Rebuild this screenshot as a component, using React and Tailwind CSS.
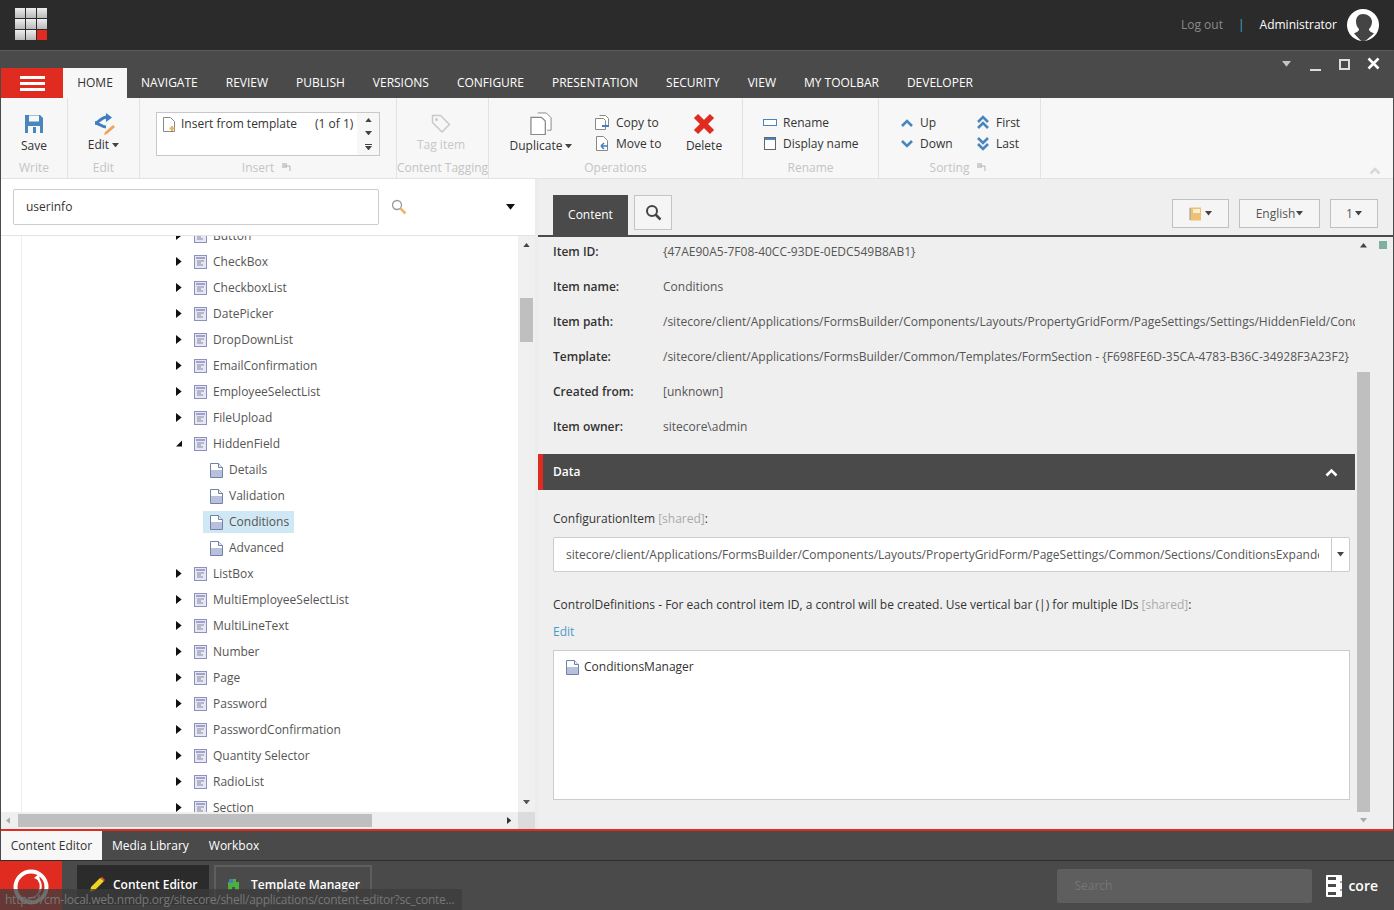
import React from "react";

const Tri = ({ dir = "down", c = "#333", s = 4, className = "" }) => {
  const pts = { down: "0,0 8,0 4,5", up: "0,5 8,5 4,0", left: "5,0 5,8 0,4", right: "0,0 0,8 5,4" }[dir];
  const vb = dir === "left" || dir === "right" ? "0 0 5 8" : "0 0 8 5";
  const w = dir === "left" || dir === "right" ? s * 1.25 : s * 2;
  const h = dir === "left" || dir === "right" ? s * 2 : s * 1.25;
  return <svg viewBox={vb} width={w} height={h} className={className}><polygon points={pts} fill={c} /></svg>;
};

const TreeIcon = () => (
  <svg width="13" height="14" viewBox="0 0 13 14" className="shrink-0">
    <rect x="0.5" y="0.5" width="12" height="13" fill="#e6e7f2" stroke="#8d8fc0" />
    <rect x="2" y="2" width="9" height="2" fill="#a0a2cc" />
    <path d="M3 6h7M3 8h4M3 10h6" stroke="#8587a0" strokeWidth="1" />
  </svg>
);

const PageIcon = ({ className = "" }) => (
  <svg width="13" height="15" viewBox="0 0 13 15" className={"shrink-0 " + className}>
    <path d="M0.5 0.5H8.5L12.5 4.5V14.5H0.5Z" fill="#fff" stroke="#6f82ab" />
    <path d="M8.5 0.5V4.5H12.5" fill="#e6eaf3" stroke="#6f82ab" />
    <rect x="1" y="7" width="11" height="7" fill="#b9c0dc" />
  </svg>
);

const tabs = ["NAVIGATE", "REVIEW", "PUBLISH", "VERSIONS", "CONFIGURE", "PRESENTATION", "SECURITY", "VIEW", "MY TOOLBAR", "DEVELOPER"];

const Group = ({ w, label, corner, children, pl = 0 }) => (
  <div style={{ width: w }} className="shrink-0 h-full border-r border-[#e3e3e3] flex flex-col">
    <div className="flex-1 min-h-0 flex" style={{ paddingLeft: pl }}>{children}</div>
    <div className={"h-[20px] flex items-center justify-center gap-[8px] text-[#c4c4c4] whitespace-nowrap leading-none pb-[1px] " + (corner ? "pr-[3px]" : "")}>
      {label}
      {corner && (
        <svg width="9" height="9" viewBox="0 0 9 9"><rect x="0" y="0" width="5" height="5" fill="#cfcfcf" /><path d="M3 3h5v5" fill="none" stroke="#b5b5b5" /></svg>
      )}
    </div>
  </div>
);

const SmallBtn = ({ icon, label, iw = 21 }) => (
  <div className="flex items-center h-[21px] whitespace-nowrap text-[#333]">
    <div style={{ width: iw }} className="flex justify-start shrink-0">{icon}</div>
    <span>{label}</span>
  </div>
);

const treeItems = ["Button", "CheckBox", "CheckboxList", "DatePicker", "DropDownList", "EmailConfirmation", "EmployeeSelectList", "FileUpload"];
const treeItems2 = ["ListBox", "MultiEmployeeSelectList", "MultiLineText", "Number", "Page", "Password", "PasswordConfirmation", "Quantity Selector", "RadioList", "Section"];

const TreeRow = ({ label, open }) => (
  <div className="h-[26px] flex items-center pl-[175px] text-[#555]">
    <div className="w-[6px] flex justify-center shrink-0 -mt-[1px]">
      {open ? (
        <svg width="7" height="7" viewBox="0 0 7 7"><polygon points="7,0 7,7 0,7" fill="#111" /></svg>
      ) : (
        <Tri dir="right" c="#111" s={4.5} />
      )}
    </div>
    <div className="ml-[12px]"><TreeIcon /></div>
    <span className="ml-[6px] whitespace-nowrap">{label}</span>
  </div>
);

const SubRow = ({ label, sel }) => (
  <div className="h-[26px] flex items-center pl-[202px]">
    <div className={"h-[22px] flex items-center pl-[7px] pr-[5px] text-[#555] " + (sel ? "bg-[#cfe8f3]" : "")}>
      <PageIcon />
      <span className="ml-[6px] whitespace-nowrap">{label}</span>
    </div>
  </div>
);

const Field = ({ k, v }) => (
  <div className="h-[35px] flex items-center whitespace-nowrap overflow-hidden">
    <div className="w-[110px] shrink-0 font-semibold text-[#333]">{k}</div>
    <div className="text-[#555]">{v}</div>
  </div>
);

const UpDown = ({ double, up }) => (
  <svg width="14" height={double ? 15 : 10} viewBox={double ? "0 0 14 15" : "0 0 14 10"}>
    {double ? (
      up ? (
        <path d="M2 7l5-5 5 5M2 13l5-5 5 5" fill="none" stroke="#4a86be" strokeWidth="2.6" />
      ) : (
        <path d="M2 2l5 5 5-5M2 8l5 5 5-5" fill="none" stroke="#4a86be" strokeWidth="2.6" />
      )
    ) : up ? (
      <path d="M2 8l5-5 5 5" fill="none" stroke="#4a86be" strokeWidth="2.6" />
    ) : (
      <path d="M2 2l5 5 5-5" fill="none" stroke="#4a86be" strokeWidth="2.6" />
    )}
  </svg>
);

export default function App() {
  return (
    <div className="relative w-[1394px] h-[910px] overflow-hidden flex flex-col font-['Open_Sans',sans-serif] text-[12px] leading-[16px] bg-[#2b2b2b]">
      {/* top bar */}
      <div className="h-[50px] shrink-0 bg-[#2b2b2b] flex items-center pl-[15px] pr-[15px]">
        <div className="grid grid-cols-3 gap-[1px] w-[32px] h-[32px] -mt-[2px]">
          {Array.from({ length: 9 }).map((_, i) => (
            <div key={i} className={i === 8 ? "bg-[#e02b20]" : "bg-gradient-to-b from-[#eeeeee] to-[#b9b9b9]"} />
          ))}
        </div>
        <div className="ml-auto flex items-center">
          <span className="text-[#8a8a8a]">Log out</span>
          <span className="ml-[15px] text-[#4aa3df]">|</span>
          <span className="ml-[15px] text-white">Administrator</span>
          <svg width="32" height="32" viewBox="0 0 32 32" className="ml-[10px]">
            <defs><clipPath id="av"><circle cx="16" cy="16" r="16" /></clipPath></defs>
            <circle cx="16" cy="16" r="16" fill="#fff" />
            <g clipPath="url(#av)">
              <path d="M16 5c-4.500 0-7 3.500-7 7.500 0 3 1.200 5.500 3 7.500 0 2-1 2.500-5 4.500L16 34l11-9.500c-4-2-5-2.500-5-4.500 1.800-2 3-4.500 3-7.500C25 8.500 20.500 5 16 5z" fill="#444" />
            </g>
          </svg>
        </div>
      </div>

      {/* window */}
      <div className="flex-1 min-h-0 flex flex-col border-x border-[#4a4a4a] border-t border-t-[#5c5c5c] bg-[#4a4a4a]">
        {/* title row */}
        <div className="h-[17px] shrink-0 flex items-start justify-end text-white">
          <div className="flex items-center h-[24px] pt-[2px]">
            <Tri c="#c4c4c4" s={4.5} />
            <div className="ml-[19px] mt-[11px] w-[11px] h-[2px] bg-[#dcdcdc]" />
            <div className="ml-[18px] w-[11px] h-[11px] border-[2px] border-[#dcdcdc]" />
            <svg width="13" height="13" viewBox="0 0 13 13" className="ml-[17px] mr-[13px] -mt-[1px]"><path d="M1.500 1.500l10 10M11.500 1.500l-10 10" stroke="#fff" strokeWidth="2.600" /></svg>
          </div>
        </div>
        {/* tabs */}
        <div className="h-[30px] shrink-0 flex items-stretch text-[#fff]">
          <div className="w-[62px] bg-[#e02b20] flex items-center justify-center">
            <div className="w-[25px] flex flex-col gap-[3px]">
              <div className="h-[3px] bg-white" /><div className="h-[3px] bg-white" /><div className="h-[3px] bg-white" />
            </div>
          </div>
          <div className="w-[64px] bg-[#f7f7f7] text-[#333] flex items-center justify-center">HOME</div>
          {tabs.map((t) => (
            <div key={t} className="px-[14px] flex items-center whitespace-nowrap">{t}</div>
          ))}
        </div>
        {/* ribbon */}
        <div className="h-[81px] shrink-0 bg-[#f7f7f7] border-b border-[#e3e3e3] flex text-[#333]">
          <Group w={67} label="Write">
            <div className="w-full flex flex-col items-center pt-[16px]">
              <svg width="20" height="20" viewBox="0 0 20 20"><path d="M1 1h15l3 3v15H1z" fill="#4a86be" /><rect x="5" y="1.500" width="10" height="6" fill="#f7f7f7" /><rect x="4" y="12" width="12" height="7" fill="#f7f7f7" /><rect x="9" y="13" width="3" height="6" fill="#4a86be" /></svg>
              <div className="mt-[4px]">Save</div>
            </div>
          </Group>
          <Group w={72} label="Edit">
            <div className="w-full flex flex-col items-center pt-[15px]">
              <svg width="22" height="22" viewBox="0 0 22 22" className="ml-[2px]">
                <path d="M1 10C5 10 7 4 13 4" stroke="#3f7fbf" strokeWidth="3" fill="none" />
                <path d="M12 0L18 4.500L12 9z" fill="#3f7fbf" />
                <path d="M1 10C5 10 7 14 12 14" stroke="#3f7fbf" strokeWidth="3" fill="none" />
                <path d="M19 12l2 2-8 7-3 1 1-3z" fill="#f0a35a" />
              </svg>
              <div className="mt-[2px] flex items-center gap-[3px]">Edit <Tri c="#444" s={3.5} /></div>
            </div>
          </Group>
          <Group w={257} label="Insert" corner pl={16}>
            <div className="mt-[14px] w-[224px] h-[44px] border border-[#c8c8c8] bg-white flex">
              <div className="flex-1 flex items-start pl-[6px] pt-[3px]">
                <svg width="13" height="15" viewBox="0 0 13 15" className="mt-[1px] shrink-0"><path d="M0.500 0.500H7.500L11.500 4.500V14.500H0.500Z" fill="#fff" stroke="#888" /><path d="M9 9v5M6.500 11.500h5" stroke="#efb15b" strokeWidth="2" /></svg>
                <span className="ml-[5px]">Insert from template</span>
                <span className="ml-[18px]">(1 of 1)</span>
              </div>
              <div className="w-[22px] bg-[#f7f7f7] flex flex-col items-center justify-between py-[5px]">
                <Tri dir="up" c="#444" s={3.5} />
                <Tri c="#444" s={3.5} />
                <div className="flex flex-col items-center gap-[1px]"><div className="w-[7px] h-[1px] bg-[#444]" /><Tri c="#444" s={3.5} /></div>
              </div>
            </div>
          </Group>
          <Group w={92} label="Content Tagging">
            <div className="w-full flex flex-col items-center pt-[16px] pr-[3px] text-[#c8c8c8]">
              <svg width="20" height="20" viewBox="0 0 20 20"><path d="M1.500 1.500h8l9 9-7.500 7.500-9.500-9.500z" fill="none" stroke="#c9c9c9" strokeWidth="1.500" /><circle cx="5.500" cy="5.500" r="1.500" fill="#c9c9c9" /></svg>
              <div className="mt-[3px]">Tag item</div>
            </div>
          </Group>
          <Group w={254} label="Operations" pl={21}>
            <div className="w-[62px] flex flex-col items-center pt-[14px]">
              <svg width="24" height="23" viewBox="0 0 24 24"><path d="M8.500 1h9l5 5v13h-4" fill="#fff" stroke="#888" /><path d="M1.500 5.500h11l4 4v14h-15z" fill="#fff" stroke="#888" strokeWidth="1.300" /></svg>
              <div className="mt-[3px] flex items-center gap-[3px] whitespace-nowrap">Duplicate <Tri c="#444" s={3.500} /></div>
            </div>
            <div className="ml-[23px] w-[72px] pt-[14px] flex flex-col">
              <SmallBtn label="Copy to" icon={<svg width="15" height="15" viewBox="0 0 15 15"><path d="M4.500 .5h6l3 3v7" fill="#fff" stroke="#888" /><path d="M.5 3.500h8l2 2v9h-10z" fill="#fff" stroke="#888" /><path d="M7 11h7" stroke="#3f7fbf" strokeWidth="2" /></svg>} />
              <SmallBtn label="Move to" icon={<svg width="13" height="15" viewBox="0 0 13 15" className="ml-[1px]"><path d="M.5 .5h7l4 4v10h-11z" fill="#fff" stroke="#888" /><path d="M5 10h7M5 10l3-3M5 10l3 3" stroke="#3f7fbf" strokeWidth="1.500" fill="none" /></svg>} />
            </div>
            <div className="ml-[19px] w-[36px] flex flex-col items-center pt-[15px]">
              <svg width="22" height="22" viewBox="0 0 22 22"><path d="M3 3l16 16M19 3L3 19" stroke="#e02b20" strokeWidth="6" /></svg>
              <div className="mt-[3px]">Delete</div>
            </div>
          </Group>
          <Group w={136} label="Rename" pl={20}>
            <div className="pt-[14px] flex flex-col">
              <SmallBtn iw={20} label="Rename" icon={<svg width="14" height="7" viewBox="0 0 14 7"><rect x=".5" y=".5" width="13" height="6" fill="#fff" stroke="#4a86be" /></svg>} />
              <SmallBtn iw={20} label="Display name" icon={<svg width="12" height="13" viewBox="0 0 12 13" className="ml-[1px]"><rect x=".5" y=".5" width="11" height="12" fill="#fff" stroke="#666" /><rect x="1" y="1" width="10" height="2" fill="#4a86be" /></svg>} />
            </div>
          </Group>
          <Group w={162} label="Sorting" corner pl={21}>
            <div className="pt-[14px] w-[76px] flex flex-col">
              <SmallBtn iw={20} label="Up" icon={<UpDown up />} />
              <SmallBtn iw={20} label="Down" icon={<UpDown />} />
            </div>
            <div className="pt-[14px] flex flex-col">
              <SmallBtn iw={20} label="First" icon={<UpDown double up />} />
              <SmallBtn iw={20} label="Last" icon={<UpDown double />} />
            </div>
          </Group>
          <div className="flex-1 flex items-end justify-end pr-[12px] pb-[3px]">
            <svg width="12" height="8" viewBox="0 0 12 8"><path d="M1.500 6.500L6 2l4.500 4.500" fill="none" stroke="#d8d8d8" strokeWidth="2.500" /></svg>
          </div>
        </div>
        {/* main */}
        <div className="h-[650px] shrink-0 flex bg-white">
          {/* left */}
          <div className="w-[534px] shrink-0 flex flex-col bg-white">
            <div className="h-[57px] shrink-0 border-b border-[#e3e3e3] flex items-center pl-[12px] pr-[20px]">
              <div className="w-[366px] h-[36px] border border-[#cccccc] rounded-[2px] flex items-center pl-[12px] text-[#333]">userinfo</div>
              <svg width="16" height="16" viewBox="0 0 16 16" className="ml-[12px]"><circle cx="6" cy="6" r="4.500" fill="none" stroke="#999" strokeWidth="1.300" /><path d="M9.500 9.500l5 5" stroke="#e9b66f" strokeWidth="2.500" /></svg>
              <div className="ml-auto"><Tri c="#111" s={4.500} /></div>
            </div>
            <div className="flex-1 min-h-0 flex">
              <div className="flex-1 min-w-0 overflow-hidden border-l border-[#eeeeee] ml-[20px]">
                <div className="-mt-[13px] -ml-[21px]">
                  {treeItems.map((t) => <TreeRow key={t} label={t} />)}
                  <TreeRow label="HiddenField" open />
                  <SubRow label="Details" />
                  <SubRow label="Validation" />
                  <SubRow label="Conditions" sel />
                  <SubRow label="Advanced" />
                  {treeItems2.map((t) => <TreeRow key={t} label={t} />)}
                </div>
              </div>
              <div className="w-[17px] shrink-0 bg-[#f0f0f0] flex flex-col items-center">
                <div className="h-[18px] flex items-center"><Tri dir="up" c="#444" s={3.500} /></div>
                <div className="w-[13px] h-[44px] mt-[44px] bg-[#bfbfbf]" />
                <div className="flex-1" />
                <div className="h-[20px] flex items-center"><Tri c="#555" s={3.500} /></div>
              </div>
            </div>
            <div className="h-[17px] shrink-0 bg-[#efefef] flex">
              <div className="flex-1 min-w-0 flex items-center pl-[5px] pr-[7px]">
                <Tri dir="left" c="#aaa" s={3.5} />
                <div className="ml-[8px] w-[354px] h-[13px] bg-[#bfbfbf]" />
                <div className="ml-auto"><Tri dir="right" c="#333" s={3.5} /></div>
              </div>
              <div className="w-[17px] shrink-0 bg-[#dcdcdc]" />
            </div>
          </div>
          <div className="w-[3px] shrink-0 bg-[#ececec]" />
          {/* right */}
          <div className="flex-1 min-w-0 bg-[#efefef] flex flex-col">
            <div className="h-[58px] shrink-0 border-b-[2px] border-[#4a4a4a] flex items-end pl-[15px] pr-[15px]">
              <div className="w-[75px] h-[40px] bg-[#4a4a4a] text-white flex items-center justify-center">Content</div>
              <div className="ml-[6px] mb-[5px] w-[38px] h-[35px] border border-[#c4c4c4] bg-[#f5f5f5] flex items-center justify-center">
                <svg width="17" height="17" viewBox="0 0 17 17"><circle cx="7" cy="7" r="5" fill="none" stroke="#444" strokeWidth="2" /><path d="M10.500 10.500l5 5" stroke="#444" strokeWidth="2.500" /></svg>
              </div>
              <div className="ml-auto mb-[7px] w-[57px] h-[29px] border border-[#c0c0c0] bg-[#f5f5f5] flex items-center justify-center gap-[3px]">
                <svg width="13" height="14" viewBox="0 0 13 14"><rect x="1" y="0.500" width="11" height="13" fill="#edc274" /><rect x="4" y="2" width="7" height="4" fill="#fbeed3" /><path d="M0 2h2M0 4h2M0 6h2M0 8h2M0 10h2M0 12h2" stroke="#999" /></svg>
                <Tri c="#444" s={3.500} />
              </div>
              <div className="ml-[10px] mb-[7px] w-[81px] h-[29px] border border-[#c0c0c0] bg-[#f5f5f5] flex items-center justify-center gap-[1px] text-[#555]">English<Tri c="#444" s={3.500} /></div>
              <div className="ml-[10px] mb-[7px] w-[48px] h-[29px] border border-[#c0c0c0] bg-[#f5f5f5] flex items-center justify-center gap-[2px] text-[#555]">1<Tri c="#444" s={3.500} /></div>
            </div>
            <div className="flex-1 min-h-0 flex">
              <div className="w-[817px] shrink-0 flex flex-col">
                <div className="pl-[15px] -mt-[3px]">
                  <Field k="Item ID:" v="{47AE90A5-7F08-40CC-93DE-0EDC549B8AB1}" />
                  <Field k="Item name:" v="Conditions" />
                  <Field k="Item path:" v="/sitecore/client/Applications/FormsBuilder/Components/Layouts/PropertyGridForm/PageSettings/Settings/HiddenField/Conditions" />
                  <Field k="Template:" v="/sitecore/client/Applications/FormsBuilder/Common/Templates/FormSection - {F698FE6D-35CA-4783-B36C-34928F3A23F2}" />
                  <Field k="Created from:" v="[unknown]" />
                  <Field k="Item owner:" v="sitecore\admin" />
                </div>
                <div className="mt-[10px] h-[36px] shrink-0 bg-[#4a4a4a] border-l-[5px] border-[#e02b20] flex items-center pl-[10px] pr-[17px] text-white font-semibold">
                  Data
                  <svg width="13" height="9" viewBox="0 0 13 9" className="ml-auto"><path d="M1.500 7.500l5-5 5 5" fill="none" stroke="#fff" strokeWidth="2.600" /></svg>
                </div>
                <div className="pl-[15px] pr-[5px]">
                  <div className="mt-[21px] text-[#333]">ConfigurationItem <span className="text-[#aaaaaa]">[shared]</span>:</div>
                  <div className="mt-[10px] h-[35px] flex border border-[#cccccc] rounded-[2px] bg-white">
                    <div className="flex-1 min-w-0 overflow-hidden whitespace-nowrap flex items-center pl-[12px] pr-[12px] text-[#555]">
                      <span className="overflow-hidden">sitecore/client/Applications/FormsBuilder/Components/Layouts/PropertyGridForm/PageSettings/Common/Sections/ConditionsExpander</span>
                    </div>
                    <div className="w-[18px] border-l border-[#cccccc] flex items-center justify-center"><Tri c="#444" s={3.500} /></div>
                  </div>
                  <div className="mt-[25px] text-[#333] whitespace-nowrap">ControlDefinitions - For each control item ID, a control will be created. Use vertical bar (|) for multiple IDs <span className="text-[#aaaaaa]">[shared]</span>:</div>
                  <div className="mt-[11px] text-[#4a9cc9]">Edit</div>
                  <div className="mt-[10px] h-[150px] border border-[#cccccc] bg-white flex items-start pl-[12px] pt-[8px] text-[#333]">
                    <PageIcon className="mt-[1px]" />
                    <span className="ml-[5px]">ConditionsManager</span>
                  </div>
                </div>
              </div>
              <div className="ml-[2px] w-[13px] shrink-0 flex flex-col items-center">
                <div className="h-[17px] flex items-center"><Tri dir="up" c="#444" s={3.500} /></div>
                <div className="w-full mt-[118px] flex-1 bg-[#bfbfbf]" />
                <div className="h-[17px] flex items-center"><Tri c="#aaa" s={3.500} /></div>
              </div>
              <div className="ml-[9px] mt-[4px] w-[8px] h-[8px] bg-[#7fb0a0]" />
            </div>
          </div>
        </div>
        {/* bottom */}
        <div className="h-[2px] shrink-0 bg-[#e02b20]" />
        <div className="h-[29px] shrink-0 flex bg-[#4a4a4a] text-[#fff]">
          <div className="w-[101px] bg-[#f7f7f7] text-[#333] flex items-center justify-center">Content Editor</div>
          <div className="px-[10px] flex items-center">Media Library</div>
          <div className="px-[10px] flex items-center">Workbox</div>
        </div>
        <div className="flex-1 min-h-0 border-t border-[#2e2e2e] flex items-center bg-[#4a4a4a] -mx-[1px]">
          <div className="w-[62px] h-full bg-[#e02b20] flex items-start justify-center pt-[8px] shrink-0 overflow-hidden">
            <svg width="36" height="36" viewBox="0 0 36 36">
              <circle cx="18" cy="18" r="15.500" fill="none" stroke="#fff" strokeWidth="4" />
              <path d="M23 8a11 11 0 0 1 3 15" fill="none" stroke="#fff" strokeWidth="2" />
              <path d="M21 9l5-4 1 7z" fill="#fff" />
              <path d="M27 22a11 11 0 0 1-12 7" fill="none" stroke="#f3b1ab" strokeWidth="2" />
            </svg>
          </div>
          <div className="ml-[15px] self-start mt-[4px] w-[132px] h-[40px] bg-[#2b2b2b] flex items-center pl-[12px] pb-[1px] text-white font-semibold">
            <svg width="17" height="17" viewBox="0 0 17 17"><path d="M1 16l1-5L11 2l4 3-9 9z" fill="#f1d31f" /><path d="M11 2l2-1 3 3-1 1z" fill="#e05a3a" /></svg>
            <span className="ml-[7px]">Content Editor</span>
          </div>
          <div className="ml-[5px] self-start mt-[4px] w-[158px] h-[40px] border-[2px] border-[#5e5e5e] flex items-center pl-[11px] pb-[1px] text-white font-semibold">
            <svg width="16" height="16" viewBox="0 0 16 16"><path d="M1 5h4V2h4v3h3v8H8v-3H5v3H1z" fill="#4caf3f" /><rect x="2" y="2" width="4" height="4" fill="#3f7fbf" /></svg>
            <span className="ml-[8px]">Template Manager</span>
          </div>
          <div className="ml-auto w-[255px] h-[34px] bg-[#5e5e5e] rounded-[2px] flex items-center pl-[17px] text-[#757575]">Search</div>
          <svg width="16" height="22" viewBox="0 0 16 22" className="ml-[14px]"><rect width="16" height="22" rx="1" fill="#fff" /><path d="M14 7h2M14 15h2" stroke="#4a4a4a" /><rect x="2" y="2" width="8" height="3" fill="#4a4a4a" /><rect x="2" y="9" width="8" height="3" fill="#4a4a4a" /><rect x="2" y="17" width="8" height="3" fill="#4a4a4a" /></svg>
          <span className="ml-[6px] mr-[16px] text-[14px] font-semibold text-white">core</span>
        </div>
      </div>

      {/* browser status tooltip */}
      <div className="absolute left-0 bottom-0 w-[462px] h-[21px] bg-[#3c3c3c]/75 rounded-tr-[2px] flex items-center pl-[5px] tracking-[-0.25px] text-[#777777] whitespace-nowrap overflow-hidden">
        https://cm-local.web.nmdp.org/sitecore/shell/applications/content-editor?sc_conte...
      </div>
    </div>
  );
}
